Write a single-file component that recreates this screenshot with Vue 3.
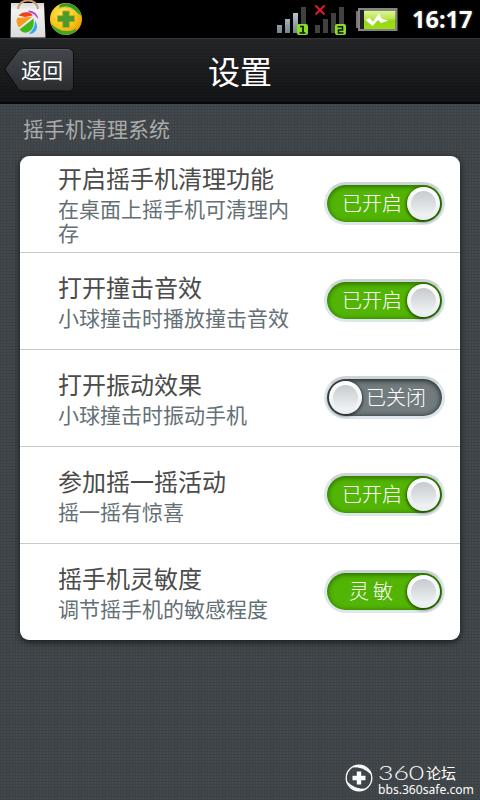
<script setup>
import { ref } from 'vue'

const rows = ref([
  { title: '开启摇手机清理功能', desc: '在桌面上摇手机可清理内存', on: true, label: '已开启' },
  { title: '打开撞击音效', desc: '小球撞击时播放撞击音效', on: true, label: '已开启' },
  { title: '打开振动效果', desc: '小球撞击时振动手机', on: false, label: '已关闭' },
  { title: '参加摇一摇活动', desc: '摇一摇有惊喜', on: true, label: '已开启' },
  { title: '摇手机灵敏度', desc: '调节摇手机的敏感程度', on: true, label: '灵敏', spaced: true },
])
</script>

<template>
  <div class="screen">
    <div class="status">
      <svg class="app-icon" width="36" height="38" viewBox="0 0 36 38">
        <defs>
          <linearGradient id="bag" x1="0" y1="0" x2="0" y2="1">
            <stop offset="0" stop-color="#d8d8d8" />
            <stop offset=".2" stop-color="#f2f2f2" />
            <stop offset="1" stop-color="#dcdcdc" />
          </linearGradient>
        </defs>
        <path d="M1 3H34L35.5 37.5H.5Z" fill="url(#bag)" />
        <path d="M8 9C9 3 13 .5 18 .5S27 3 28 9" fill="none" stroke="#c79a74" stroke-width="2" />
        <path d="M8.500 15.500Q12 11.500 18 12.300Q22 13 22.500 15.500L15 17Z" fill="#ee421a" />
        <path d="M7.500 17.500Q14 18 22.500 16.500L9 27.500Q5 22 7.500 17.500Z" fill="#f79a1e" />
        <path d="M9.500 29.500L23.500 18.500Q25 27 20 31Q14 35 9.500 29.500Z" fill="#43b51b" />
        <path d="M25 20.500Q28.500 26 26 30.500Q23 34.500 19 33.500Q25 29 25 20.500Z" fill="#2fa7ef" />
        <path d="M18.500 10.500Q27 11 28.500 19Q25.500 16.500 25 15Q22 12.500 18.500 12Z" fill="#bd32d6" />
      </svg>
      <svg class="safe-icon" width="34" height="34" viewBox="0 0 34 34">
        <defs>
          <radialGradient id="ball" cx=".4" cy=".35" r=".7">
            <stop offset="0" stop-color="#ffe860" />
            <stop offset=".6" stop-color="#fdc516" />
            <stop offset="1" stop-color="#e69b08" />
          </radialGradient>
        </defs>
        <circle cx="17" cy="17" r="16" fill="url(#ball)" />
        <path d="M11 3Q16 .2 23 2.200Q31 6 32 13.500L29 12Q24 4.500 15 5Q12 5.500 10 6Z" fill="#349632" />
        <path d="M27 29.500Q20 34.500 11 32Q4 29 2 21.500Q10 30 20 29Q24 28.500 27 26.500Z" fill="#43a32b" />
        <path d="M9 7Q18 2 25 8L31 13.500" fill="none" stroke="#b8cf3a" />
        <path d="M13.700 9H20.300V13.700H25.500V19.700H20.300V25.500H13.700V19.700H8.500V13.700H13.700Z" fill="#4d9a2c" stroke="#b7ab25" stroke-width=".8" />
      </svg>
      <svg class="signals" width="150" height="38" viewBox="270 0 150 38">
        <defs>
          <linearGradient id="bar" x1="0" y1="0" x2="0" y2="1">
            <stop offset="0" stop-color="#b7c5cb" />
            <stop offset="1" stop-color="#74848d" />
          </linearGradient>
          <linearGradient id="cell" x1="0" y1="0" x2="0" y2="1">
            <stop offset="0" stop-color="#e0f5a0" />
            <stop offset=".48" stop-color="#b7e647" />
            <stop offset=".5" stop-color="#96d719" />
            <stop offset="1" stop-color="#9bdf13" />
          </linearGradient>
        </defs>
        <path d="M277 25h5v8h-5zM285 19h5v14h-5zM293 13h5v20h-5z" fill="url(#bar)" />
        <path d="M301 7h5v26h-5zM315 25h5v8h-5zM323 19h5v14h-5zM331 13h5v20h-5zM339 7h5v26h-5z" fill="#414141" />
        <path d="M315.500 5.500l9 9M324.500 5.500l-9 9" stroke="#d5201d" stroke-width="2.200" />
        <rect x="297" y="24" width="11" height="11" rx="2" fill="#8ade22" />
        <rect x="335" y="24" width="11" height="11" rx="2" fill="#8ade22" />
        <path d="M300 26.500h3v6M299.500 33h6" fill="none" stroke="#111" stroke-width="1.700" />
        <path d="M337.500 26.700h5v3.200h-4v3.200h5" fill="none" stroke="#111" stroke-width="1.500" />
        <path d="M359 12h-2v15h2" fill="none" stroke="#777" stroke-width="2" />
        <rect x="359" y="9" width="37.500" height="21" fill="#222" stroke="#858585" stroke-width="2" />
        <rect x="364" y="10.500" width="31.500" height="18.500" fill="url(#cell)" />
        <path d="M365.500 20L369.500 18L373 21.500L379 13.500L382 19L388.500 20.500L381 23L378 20L372.500 26Z" fill="#fff" />
      </svg>
      <span class="clock">16:17</span>
    </div>

    <header class="header">
      <button class="back">
        <svg class="back-shape" width="70" height="44" viewBox="0 0 70 44">
          <defs>
            <linearGradient id="back" x1="0" y1="0" x2="0" y2="1">
              <stop offset="0" stop-color="#43464a" />
              <stop offset="1" stop-color="#2a2d30" />
            </linearGradient>
          </defs>
          <path d="M1 22Q0 21 1 20L13 3.500Q15 1 18 1H64Q69 1 69 6V38Q69 43 64 43H18Q15 43 13 40Z" fill="url(#back)" stroke="#0b0c0d" />
          <path d="M16 2Q17 1.500 18 1.500H65" fill="none" stroke="#53565a" />
        </svg>
        <span class="back-text">返回</span>
      </button>
      <h1 class="heading">设置</h1>
    </header>

    <main class="content">
      <h2 class="section">摇手机清理系统</h2>
      <div class="card">
        <div v-for="row in rows" :key="row.title" class="row">
          <div class="texts">
            <div class="title">{{ row.title }}</div>
            <div class="desc">{{ row.desc }}</div>
          </div>
          <div class="toggle" :class="{ off: !row.on }">
            <span class="label" :class="{ spaced: row.spaced }">{{ row.label }}</span>
            <span class="knob"><i class="dimple"></i></span>
          </div>
        </div>
      </div>
    </main>

    <footer class="mark">
      <svg width="28" height="28" viewBox="0 0 28 28">
        <circle cx="14" cy="14" r="12.800" fill="none" stroke="#fff" stroke-width="1.300" />
        <path d="M8 2.800Q19 -1 26 10Q18 2 8 2.800ZM2 18Q10 26 20 25.200Q9 29 2 18Z" fill="#fff" stroke="#fff" />
        <path d="M14 7.500v13M7.500 14h13" stroke="#fff" stroke-width="4.400" />
      </svg>
      <div class="mark-text">
        <div class="brand"><span class="num">360</span><span class="forum">论坛</span></div>
        <div class="site">bbs.360safe.com</div>
      </div>
    </footer>
  </div>
</template>

<style>
body {
  margin: 0;
}
</style>

<style scoped>
.screen {
  width: 480px;
  height: 800px;
  box-sizing: border-box;
  position: relative;
  display: flex;
  flex-direction: column;
  overflow: hidden;
  font-family: "Noto Sans CJK SC", sans-serif;
  background:
    repeating-linear-gradient(0deg, rgba(0, 0, 0, .07) 0 1px, transparent 1px 3px),
    repeating-linear-gradient(90deg, rgba(0, 0, 0, .07) 0 1px, transparent 1px 3px),
    #42484c;
}
.status {
  flex: none;
  height: 38px;
  display: flex;
  align-items: flex-start;
  background: #000;
}
.app-icon {
  margin-left: 10px;
}
.safe-icon {
  margin: 2px 0 0 3px;
}
.signals {
  margin-left: 187px;
}
.clock {
  margin-left: -8px;
  color: #fff;
  font: bold 23.5px/38px "Noto Sans", sans-serif;
  text-shadow: 0 0 3px rgba(255, 255, 255, .35);
}
.header {
  flex: none;
  height: 66px;
  box-sizing: border-box;
  display: grid;
  grid-template-columns: 100px 1fr 100px;
  border-top: 1px solid #343638;
  border-bottom: 2px solid #050606;
  background:
    repeating-linear-gradient(0deg, rgba(0, 0, 0, .12) 0 1px, transparent 1px 3px),
    linear-gradient(#242628, #131415);
}
.back {
  width: 71px;
  height: 44px;
  margin: 9px 0 0 4px;
  padding: 0;
  border: 0;
  background: none;
  display: grid;
  color: #fff;
}
.back-shape,
.back-text {
  grid-area: 1 / 1;
}
.back-shape {
  width: 71px;
}
.back-text {
  padding-left: 17px;
  text-align: left;
  font: 21px/43px "Noto Sans CJK SC", sans-serif;
}
.heading {
  margin: 0;
  text-align: center;
  color: #fff;
  font-size: 32px;
  font-weight: 400;
  line-height: 63px;
}
.content {
  padding: 7px 20px 0;
}
.section {
  margin: 0 0 11px 3px;
  color: #a9abaa;
  font-size: 21px;
  font-weight: 400;
  line-height: 34px;
}
.card {
  height: 484px;
  border-radius: 9px;
  background: #fff;
  box-shadow: 0 2px 7px rgba(0, 0, 0, .65);
}
.row {
  height: 97px;
  box-sizing: border-box;
  display: flex;
  align-items: center;
  justify-content: space-between;
  padding: 0 15px 2px 38px;
  border-bottom: 1px solid #c9c9c9;
}
.row:last-child {
  height: 96px;
  border-bottom: 0;
}
.texts {
  width: 240px;
}
.title {
  color: #4b4b4b;
  font-size: 24px;
  line-height: 34px;
}
.desc {
  padding: 1px 0;
  color: #647075;
  font-size: 21px;
  line-height: 24px;
}
.toggle {
  width: 121px;
  height: 43px;
  box-sizing: border-box;
  display: flex;
  align-items: center;
  border: 3px solid #dde6eb;
  border-top-color: #cdd4d8;
  border-radius: 22px;
  background: #52b404;
  box-shadow: inset 0 1px 4px 1px rgba(20, 70, 0, .6);
}
.label {
  flex: 1;
  padding-left: 15px;
  color: #fff;
  font-size: 20px;
  font-weight: 300;
  line-height: 36px;
  white-space: nowrap;
}
.spaced {
  padding-left: 22px;
  letter-spacing: 4px;
}
.knob {
  flex: none;
  width: 33px;
  height: 33px;
  margin-right: 2px;
  display: grid;
  place-items: center;
  border-radius: 50%;
  background: linear-gradient(#fff, #e9eef1);
  box-shadow: 0 1px 3px 1px rgba(0, 0, 0, .55);
}
.dimple {
  width: 25px;
  height: 25px;
  border-radius: 50%;
  background: linear-gradient(#c5cbcf, #f1f3f4);
}
.off {
  flex-direction: row-reverse;
  background: #727b7e;
  box-shadow: inset 0 1px 5px 1px rgba(20, 28, 32, .8);
}
.off .label {
  padding-left: 4px;
}
.off .knob {
  margin: 0 0 0 2px;
}
.mark {
  position: absolute;
  left: 345px;
  top: 764px;
  display: flex;
  gap: 5px;
  color: #fff;
}
.brand {
  height: 18px;
  display: flex;
  line-height: 17px;
}
.num {
  width: 48px;
  font-family: Lato, sans-serif;
  font-size: 19px;
  font-weight: 300;
  transform: scaleX(1.4);
  transform-origin: left;
}
.forum {
  font-size: 15px;
}
.site {
  font: 12.100px/15px "Noto Sans", sans-serif;
}
</style>
